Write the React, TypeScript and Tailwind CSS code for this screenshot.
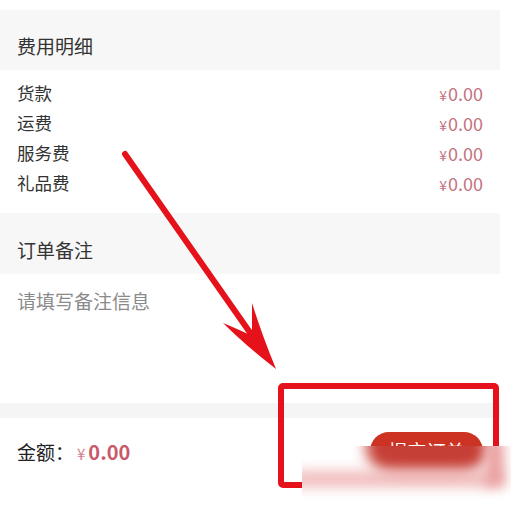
const fees = [
  { label: "货款", value: "0.00" },
  { label: "运费", value: "0.00" },
  { label: "服务费", value: "0.00" },
  { label: "礼品费", value: "0.00" },
];

const Price = ({ value }: { value: string }) => (
  <span className="flex items-baseline text-[#c4727f]">
    <span className="text-[14px] mr-[1px]">¥</span>
    <span className="text-[18px]">{value}</span>
  </span>
);

export default function App() {
  return (
    <div
      className="relative w-[511px] h-[507px] overflow-hidden bg-white pt-[10px] text-[#333]"
      style={{ fontFamily: '"Noto Sans CJK SC", "Noto Sans", sans-serif' }}
    >
      <div className="w-[500px]">
        {/* 费用明细 */}
        <div className="h-[60px] bg-[#f7f7f7] pl-[17px] pt-[12px] flex items-center text-[19px]">
          费用明细
        </div>
        <div className="pt-[8px] pb-[15px] pl-[17px] pr-[17px]">
          {fees.map((f) => (
            <div key={f.label} className="h-[30px] flex items-center justify-between text-[17.5px]">
              <span>{f.label}</span>
              <Price value={f.value} />
            </div>
          ))}
        </div>

        {/* 订单备注 */}
        <div className="h-[61px] bg-[#f7f7f7] pl-[17px] pt-[14px] flex items-center text-[19px]">
          订单备注
        </div>
        <div className="h-[129px] pl-[17px] pt-[13px] text-[19px] text-[#8a8a8a]">
          请填写备注信息
        </div>
        <div className="h-[15px] bg-[#f5f5f5]" />

        {/* footer */}
        <div className="h-[89px] flex items-start justify-between pl-[17px] pr-[17px]">
          <div className="flex items-baseline mt-[19px] text-[19px]">
            <span className="text-[#222]">金额：</span>
            <span className="ml-[3px] text-[15px] text-[#d4808c]">¥</span>
            <span className="ml-[3px] text-[20px] font-bold text-[#c85a6c]">0.00</span>
          </div>
          <button className="mt-[14px] w-[113px] h-[38px] rounded-full bg-[#cc3322] text-white text-[19px] leading-none pb-[2px]">
            提交订单
          </button>
        </div>
      </div>

      {/* annotation */}
      <svg className="absolute left-0 top-0 pointer-events-none" width="511" height="507" viewBox="0 0 511 507">
        <line x1="125" y1="154" x2="258" y2="344" stroke="#e5121b" strokeWidth="6" strokeLinecap="round" />
        <path
          d="M276 369 Q245 345 223 323 Q240 330 252 336 Q252 320 252 303 Q262 335 276 369 Z"
          fill="#e5121b"
        />
        <rect x="281" y="386" width="215" height="99" rx="2" fill="none" stroke="#e5121b" strokeWidth="6" />
      </svg>

      {/* watermark blur */}
      <div className="absolute left-[302px] top-[446px] w-[209px] h-[61px] overflow-hidden bg-white">
        <div className="absolute left-[64px] top-[-24px] w-[122px] h-[50px] rounded-full bg-[#c63f36] blur-[7px]" />
        <div className="absolute left-[-10px] top-[26px] w-[210px] h-[14px] bg-[#eeb0b0] blur-[7px]" />
        <div className="absolute left-[184px] top-[-6px] w-[18px] h-[46px] bg-[#eaa0a0] blur-[6px]" />
      </div>
    </div>
  );
}
